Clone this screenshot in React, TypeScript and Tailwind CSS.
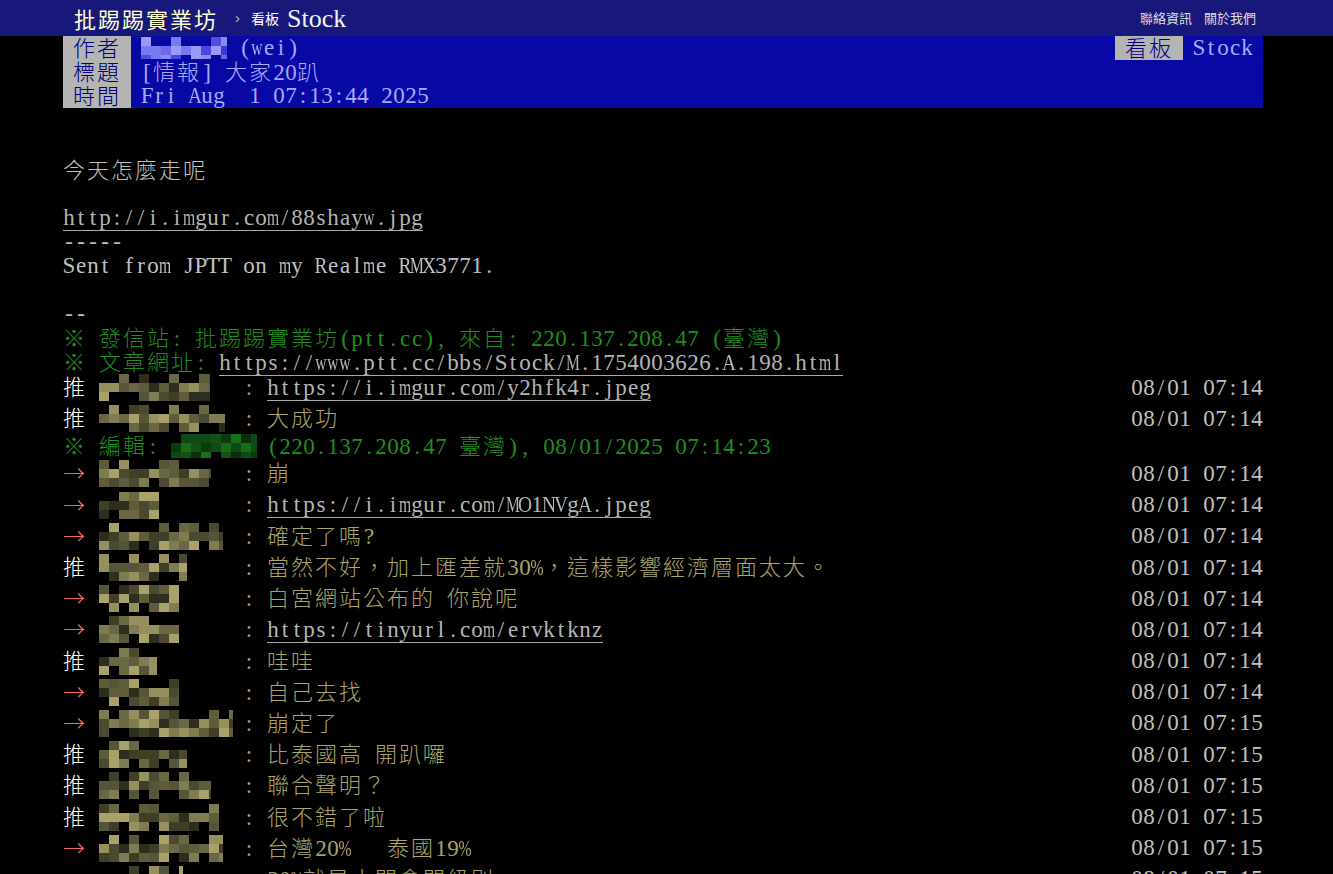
import React from "react";

const CJK = "font-['Noto_Sans_CJK_TC',sans-serif] text-[22px] font-light tracking-[2px] leading-[20px]";
const WIDE = "mwMW%@&";
const MID = "ABCDGHKNOQRUVXY";

// terminal-style cells: half-width chars get a 12px cell, full-width runs 24px per char
function Cell({ c }: { c: string }) {
  if (c === " ") return <span className="inline-flex w-[12px] justify-center">{"\u00a0"}</span>;
  if (WIDE.includes(c)) return <span className="inline-flex w-[12px] scale-x-[0.68] justify-center">{c}</span>;
  if (MID.includes(c)) return <span className="inline-flex w-[12px] scale-x-[0.85] justify-center">{c}</span>;
  return <span className="inline-flex w-[12px] justify-center">{c}</span>;
}

function T({ s }: { s: string }) {
  const runs = s.match(/[\x00-\x7f]+|[^\x00-\x7f]+/g) ?? [];
  return (
    <>
      {runs.map((r, i) =>
        /^[\x00-\x7f]/.test(r) ? (
          <React.Fragment key={i}>
            {r.split("").map((c, j) => (
              <Cell key={j} c={c} />
            ))}
          </React.Fragment>
        ) : (
          <span key={i} className={CJK}>
            {r}
          </span>
        )
      )}
    </>
  );
}

function Link({ s }: { s: string }) {
  return (
    <span className="border-b border-[#a8a8a8] text-[#b4b4b4]">
      <T s={s} />
    </span>
  );
}

const OLIVE = ["#3f3f28", "#55553a", "#6a6844", "#7f7c52", "#95905e", "#a8a26a", "#4b4a30", "#5f5c3a", "#2e2e1e"];
const GREEN = ["#0b3a0b", "#125212", "#1a6a1a", "#0f4a16", "#206b20", "#0a2f0a", "#167016"];
const BLUE = ["#3a3ad8", "#5050e0", "#7a7af0", "#9a9af5", "#4848dc", "#6a6ae8", "#8a8af0"];

function Mosaic({ w, seed, palette, h = 27 }: { w: number; seed: number; palette: string[]; h?: number }) {
  let s = seed * 7919 + 13;
  const rnd = () => {
    s = (s * 9301 + 49297) % 233280;
    return s / 233280;
  };
  const cw = 10;
  const ch = 9;
  const cols = Math.ceil(w / cw);
  const rows = Math.ceil(h / ch);
  const cells: React.ReactNode[] = [];
  for (let r = 0; r < rows; r++) {
    for (let c = 0; c < cols; c++) {
      const v = rnd();
      if (r === 0 && v < 0.5) continue;
      if (r === rows - 1 && r > 0 && v < 0.25) continue;
      cells.push(
        <rect key={`${r}-${c}`} x={c * cw} y={r * ch} width={cw} height={ch} fill={palette[Math.floor(rnd() * palette.length)]} />
      );
    }
  }
  return (
    <svg width={w} height={h} className="block blur-[0.6px]">
      {cells}
    </svg>
  );
}

type Push = { tag: string; w: number; text: string; time: string; link?: boolean; edit?: boolean };

const PUSHES: Push[] = [
  { tag: "推", w: 111, text: "https://i.imgur.com/y2hfk4r.jpeg", link: true, time: "08/01 07:14" },
  { tag: "推", w: 126, text: "大成功", time: "08/01 07:14" },
  { tag: "", w: 86, text: "", time: "", edit: true },
  { tag: "→", w: 112, text: "崩", time: "08/01 07:14" },
  { tag: "→", w: 60, text: "https://i.imgur.com/MO1NVgA.jpeg", link: true, time: "08/01 07:14" },
  { tag: "→", w: 124, text: "確定了嗎?", time: "08/01 07:14" },
  { tag: "推", w: 88, text: "當然不好，加上匯差就30%，這樣影響經濟層面太大。", time: "08/01 07:14" },
  { tag: "→", w: 80, text: "白宮網站公布的 你說呢", time: "08/01 07:14" },
  { tag: "→", w: 80, text: "https://tinyurl.com/ervktknz", link: true, time: "08/01 07:14" },
  { tag: "推", w: 58, text: "哇哇", time: "08/01 07:14" },
  { tag: "→", w: 80, text: "自己去找", time: "08/01 07:14" },
  { tag: "→", w: 134, text: "崩定了", time: "08/01 07:15" },
  { tag: "推", w: 88, text: "比泰國高 開趴囉", time: "08/01 07:15" },
  { tag: "推", w: 112, text: "聯合聲明？", time: "08/01 07:15" },
  { tag: "推", w: 120, text: "很不錯了啦", time: "08/01 07:15" },
  { tag: "→", w: 124, text: "台灣20%   泰國19%", time: "08/01 07:15" },
  { tag: "→", w: 84, text: "30%就是小開會開級別", time: "08/01 07:15" },
  { tag: "推", w: 100, text: "穩了", time: "08/01 07:15" },
];

function PushRow({ p, i }: { p: Push; i: number }) {
  if (p.edit) {
    return (
      <div className="flex h-[24px] items-center whitespace-pre text-[#1f8f1f]">
        <div>
          <T s="※ 編輯: " />
        </div>
        <Mosaic w={86} seed={99} palette={GREEN} h={24} />
        <span className="w-[10px]" />
        <div>
          <T s="(220.137.208.47 臺灣), 08/01/2025 07:14:23" />
        </div>
      </div>
    );
  }
  return (
    <div className="flex h-[31.2px] items-center whitespace-pre">
      <div className={`w-[36px] ${p.tag === "推" ? "text-white" : "text-[#f06a6a]"}`}>
        <T s={p.tag} />
      </div>
      <div className="w-[144px]">
        <Mosaic w={p.w} seed={i + 1} palette={OLIVE} />
      </div>
      <div className="flex-1 text-[#a9a46a]">
        <T s=": " />
        {p.link ? <Link s={p.text} /> : <T s={p.text} />}
      </div>
      <div className="text-[#c0c0c0]">
        <T s={p.time} />
      </div>
    </div>
  );
}

function MetaTag({ label }: { label: string }) {
  return (
    <div className="bg-[#b4b4b4] px-[10px] text-[#000080]">
      <T s={label} />
    </div>
  );
}

export default function App() {
  return (
    <div className="min-h-screen bg-black font-['Liberation_Serif',serif] text-[23px] leading-[24px] text-[#c0c0c0]">
      <div className="h-[36px] bg-[#18187a]">
        <div className="ml-[63px] flex h-full w-[1200px] items-center justify-between pl-[11px] pr-[7px] leading-normal">
          <div className="flex items-center">
            <span className="font-['Noto_Sans_CJK_TC',sans-serif] text-[22px] tracking-[2px] text-[#ffffd0]">批踢踢實業坊</span>
            <span className="ml-[17px] font-['Liberation_Sans',sans-serif] text-[15px] text-[#bbbbbb]">›</span>
            <span className="ml-[11px] font-['Noto_Sans_CJK_TC',sans-serif] text-[14px] text-white">看板</span>
            <span className="ml-[8px] font-['Liberation_Serif',serif] text-[26px] text-[#f0f0f0]">Stock</span>
          </div>
          <div className="flex gap-[12px] font-['Noto_Sans_CJK_TC',sans-serif] text-[13px] text-[#dddddd]">
            <span>聯絡資訊</span>
            <span>關於我們</span>
          </div>
        </div>
      </div>

      <div className="ml-[63px] w-[1200px]">
        <div className="bg-[#0808a4] whitespace-pre text-[#a8a8ff]">
          <div className="flex h-[24px] justify-between">
            <div className="flex">
              <MetaTag label="作者" />
              <div className="flex items-center pl-[10px]">
                <Mosaic w={86} seed={42} palette={BLUE} h={22} />
                <div>
                  <T s=" (wei)" />
                </div>
              </div>
            </div>
            <div className="flex">
              <MetaTag label="看板" />
              <div className="px-[10px]">
                <T s="Stock" />
              </div>
            </div>
          </div>
          <div className="flex h-[24px]">
            <MetaTag label="標題" />
            <div className="pl-[10px]">
              <T s="[情報] 大家20趴" />
            </div>
          </div>
          <div className="flex h-[24px]">
            <MetaTag label="時間" />
            <div className="pl-[10px]">
              <T s="Fri Aug  1 07:13:44 2025" />
            </div>
          </div>
        </div>

        <div className="mt-[50px] whitespace-pre">
          <div className="h-[24px]">
            <T s="今天怎麼走呢" />
          </div>
          <div className="h-[24px]" />
          <div className="h-[24px]">
            <Link s="http://i.imgur.com/88shayw.jpg" />
          </div>
          <div className="h-[24px]">
            <T s="-----" />
          </div>
          <div className="h-[24px]">
            <T s="Sent from JPTT on my Realme RMX3771." />
          </div>
          <div className="h-[24px]" />
          <div className="h-[24px]">
            <T s="--" />
          </div>
          <div className="h-[24px] text-[#1f8f1f]">
            <T s="※ 發信站: 批踢踢實業坊(ptt.cc), 來自: 220.137.208.47 (臺灣)" />
          </div>
          <div className="h-[24px] text-[#1f8f1f]">
            <T s="※ 文章網址: " />
            <Link s="https://www.ptt.cc/bbs/Stock/M.1754003626.A.198.html" />
          </div>
        </div>

        <div className="mt-[-2px]">
          {PUSHES.map((p, i) => (
            <PushRow key={i} p={p} i={i} />
          ))}
        </div>
      </div>
    </div>
  );
}
